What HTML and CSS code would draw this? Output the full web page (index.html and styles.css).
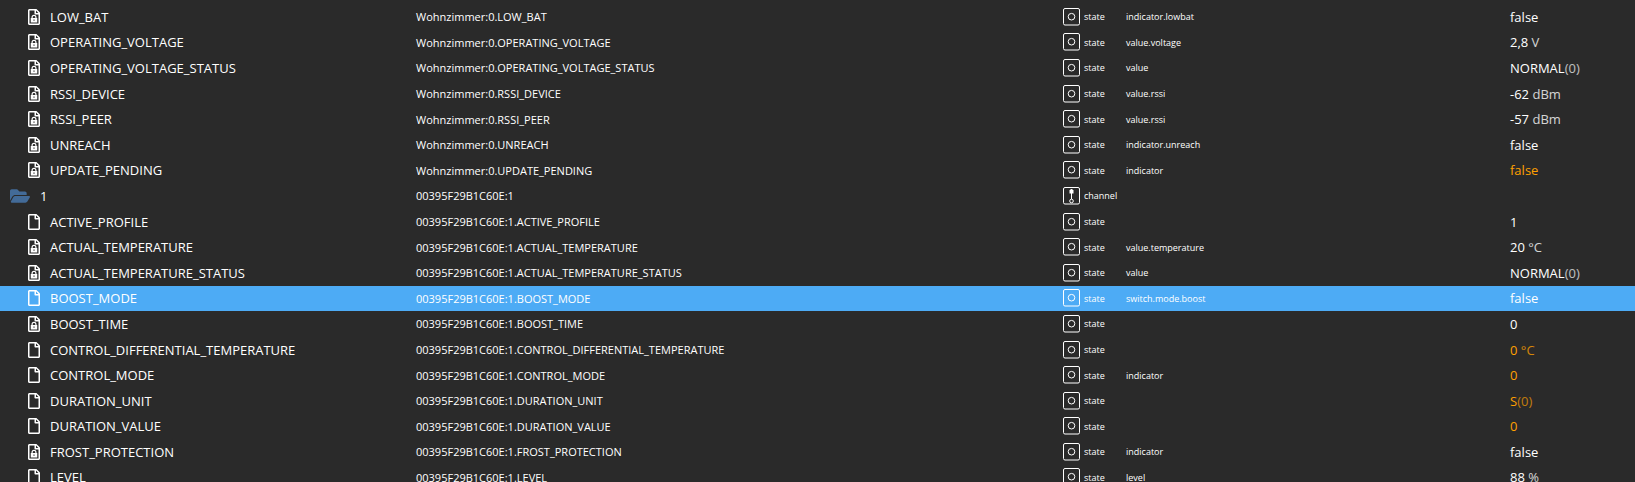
FILE: index.html
```
<!DOCTYPE html>
<html lang="de">
<head>
<meta charset="utf-8">
<title>Objekte</title>
<link rel="stylesheet" href="styles.css">
</head>
<body>
<svg class="sprite" aria-hidden="true">
  <symbol id="file" viewBox="0 0 384 512"><path d="M369.9 97.9L286 14C277 5 264.8 0 252.1 0H48C21.5 0 0 21.5 0 48v416c0 26.500 21.500 48 48 48h288c26.500 0 48-21.500 48-48V131.900c0-12.700-5.100-25-14.100-34zM332.100 128H256V51.900l76.100 76.100zM48 464V48h160v104c0 13.300 10.700 24 24 24h104v288H48z"/></symbol>
  <symbol id="locked" viewBox="0 0 384 512"><use href="#file"/><path fill-rule="evenodd" d="M88 288h24v-24a80 80 0 0 1 160 0v24h24v144H88zM150 288h84v-24a42 42 0 0 0-84 0zM174 334v44h36v-44z"/></symbol>
  <symbol id="folder" viewBox="0 0 576 512"><path d="M572.694 292.093L500.270 416.248A63.997 63.997 0 0 1 444.989 448H45.025c-18.523 0-30.064-20.093-20.731-36.093l72.424-124.155A64 64 0 0 1 152 256h399.964c18.523 0 30.064 20.093 20.730 36.093zM152 224h328v-48c0-26.510-21.490-48-48-48H272l-64-64H48C21.490 64 0 85.490 0 112v278.046l69.077-118.418C86.214 242.250 117.989 224 152 224z"/></symbol>
  <symbol id="frame" viewBox="0 0 17 18"><rect x=".5" y=".5" width="16" height="16.500" rx="1.500" fill="none" stroke="currentColor"/></symbol>
  <symbol id="state" viewBox="0 0 17 18"><use href="#frame"/><circle cx="8.500" cy="8.700" r="3.300" fill="none" stroke="currentColor"/></symbol>
  <symbol id="channel" viewBox="0 0 17 18"><use href="#frame"/><path d="M6.500 3h4v3.500h-4zM7.500 2h2v1h-2zM8 6h1v6H8z"/><circle cx="8.500" cy="14" r="1.800" fill="none" stroke="currentColor"/></symbol>
</svg>
<table class="objects">
<tbody>
<tr><td class="name"></td><td class="id"></td><td class="type"><svg class="badge"><use href="#state"/></svg></td><td class="role"></td><td class="value"></td></tr>
<tr><td class="name"><svg class="doc"><use href="#locked"/></svg>LOW_BAT</td><td class="id">Wohnzimmer:0.LOW_BAT</td><td class="type"><svg class="badge"><use href="#state"/></svg>state</td><td class="role">indicator.lowbat</td><td class="value">false</td></tr>
<tr><td class="name"><svg class="doc"><use href="#locked"/></svg>OPERATING_VOLTAGE</td><td class="id">Wohnzimmer:0.OPERATING_VOLTAGE</td><td class="type"><svg class="badge"><use href="#state"/></svg>state</td><td class="role">value.voltage</td><td class="value">2,8 <span class="unit">V</span></td></tr>
<tr><td class="name"><svg class="doc"><use href="#locked"/></svg>OPERATING_VOLTAGE_STATUS</td><td class="id">Wohnzimmer:0.OPERATING_VOLTAGE_STATUS</td><td class="type"><svg class="badge"><use href="#state"/></svg>state</td><td class="role">value</td><td class="value">NORMAL<span class="raw">(0)</span></td></tr>
<tr><td class="name"><svg class="doc"><use href="#locked"/></svg>RSSI_DEVICE</td><td class="id">Wohnzimmer:0.RSSI_DEVICE</td><td class="type"><svg class="badge"><use href="#state"/></svg>state</td><td class="role">value.rssi</td><td class="value">-62 <span class="unit">dBm</span></td></tr>
<tr><td class="name"><svg class="doc"><use href="#locked"/></svg>RSSI_PEER</td><td class="id">Wohnzimmer:0.RSSI_PEER</td><td class="type"><svg class="badge"><use href="#state"/></svg>state</td><td class="role">value.rssi</td><td class="value">-57 <span class="unit">dBm</span></td></tr>
<tr><td class="name"><svg class="doc"><use href="#locked"/></svg>UNREACH</td><td class="id">Wohnzimmer:0.UNREACH</td><td class="type"><svg class="badge"><use href="#state"/></svg>state</td><td class="role">indicator.unreach</td><td class="value">false</td></tr>
<tr><td class="name"><svg class="doc"><use href="#locked"/></svg>UPDATE_PENDING</td><td class="id">Wohnzimmer:0.UPDATE_PENDING</td><td class="type"><svg class="badge"><use href="#state"/></svg>state</td><td class="role">indicator</td><td class="value pending">false</td></tr>
<tr><td class="name group"><svg class="folder"><use href="#folder"/></svg>1</td><td class="id">00395F29B1C60E:1</td><td class="type"><svg class="badge"><use href="#channel"/></svg>channel</td><td class="role"></td><td class="value"></td></tr>
<tr><td class="name"><svg class="doc"><use href="#file"/></svg>ACTIVE_PROFILE</td><td class="id">00395F29B1C60E:1.ACTIVE_PROFILE</td><td class="type"><svg class="badge"><use href="#state"/></svg>state</td><td class="role"></td><td class="value">1</td></tr>
<tr><td class="name"><svg class="doc"><use href="#locked"/></svg>ACTUAL_TEMPERATURE</td><td class="id">00395F29B1C60E:1.ACTUAL_TEMPERATURE</td><td class="type"><svg class="badge"><use href="#state"/></svg>state</td><td class="role">value.temperature</td><td class="value">20 <span class="unit">°C</span></td></tr>
<tr><td class="name"><svg class="doc"><use href="#locked"/></svg>ACTUAL_TEMPERATURE_STATUS</td><td class="id">00395F29B1C60E:1.ACTUAL_TEMPERATURE_STATUS</td><td class="type"><svg class="badge"><use href="#state"/></svg>state</td><td class="role">value</td><td class="value">NORMAL<span class="raw">(0)</span></td></tr>
<tr class="selected"><td class="name"><svg class="doc"><use href="#file"/></svg>BOOST_MODE</td><td class="id">00395F29B1C60E:1.BOOST_MODE</td><td class="type"><svg class="badge"><use href="#state"/></svg>state</td><td class="role">switch.mode.boost</td><td class="value">false</td></tr>
<tr><td class="name"><svg class="doc"><use href="#locked"/></svg>BOOST_TIME</td><td class="id">00395F29B1C60E:1.BOOST_TIME</td><td class="type"><svg class="badge"><use href="#state"/></svg>state</td><td class="role"></td><td class="value">0</td></tr>
<tr><td class="name"><svg class="doc"><use href="#file"/></svg>CONTROL_DIFFERENTIAL_TEMPERATURE</td><td class="id">00395F29B1C60E:1.CONTROL_DIFFERENTIAL_TEMPERATURE</td><td class="type"><svg class="badge"><use href="#state"/></svg>state</td><td class="role"></td><td class="value pending">0 <span class="unit">°C</span></td></tr>
<tr><td class="name"><svg class="doc"><use href="#file"/></svg>CONTROL_MODE</td><td class="id">00395F29B1C60E:1.CONTROL_MODE</td><td class="type"><svg class="badge"><use href="#state"/></svg>state</td><td class="role">indicator</td><td class="value pending">0</td></tr>
<tr><td class="name"><svg class="doc"><use href="#file"/></svg>DURATION_UNIT</td><td class="id">00395F29B1C60E:1.DURATION_UNIT</td><td class="type"><svg class="badge"><use href="#state"/></svg>state</td><td class="role"></td><td class="value pending">S<span class="raw">(0)</span></td></tr>
<tr><td class="name"><svg class="doc"><use href="#file"/></svg>DURATION_VALUE</td><td class="id">00395F29B1C60E:1.DURATION_VALUE</td><td class="type"><svg class="badge"><use href="#state"/></svg>state</td><td class="role"></td><td class="value pending">0</td></tr>
<tr><td class="name"><svg class="doc"><use href="#locked"/></svg>FROST_PROTECTION</td><td class="id">00395F29B1C60E:1.FROST_PROTECTION</td><td class="type"><svg class="badge"><use href="#state"/></svg>state</td><td class="role">indicator</td><td class="value">false</td></tr>
<tr><td class="name"><svg class="doc"><use href="#file"/></svg>LEVEL</td><td class="id">00395F29B1C60E:1.LEVEL</td><td class="type"><svg class="badge"><use href="#state"/></svg>state</td><td class="role">level</td><td class="value">88 <span class="unit">%</span></td></tr>
</tbody>
</table>
</body>
</html>
```
FILE: styles.css
```
* {
  box-sizing: border-box;
}

body {
  margin: 0;
  height: 100vh;
  overflow: hidden;
  background: #2a2a2a;
  color: #fff;
  font-family: "Open Sans", "Noto Sans", sans-serif;
}

.sprite {
  display: none;
}

svg {
  flex: none;
  fill: currentColor;
}

/* The list is scrolled: only the lower edge of its first row shows. */
.objects,
.objects tbody {
  display: block;
}

.objects {
  margin-top: -1.35rem;
}

.objects tr {
  display: grid;
  grid-template-columns: 416px 1fr 63px 384px 125px;
  height: 1.6rem;
}

.objects td {
  display: flex;
  align-items: center;
  padding: 0;
  white-space: nowrap;
}

.objects .name {
  gap: 10px;
  padding-left: 28px;
  font-size: 13px;
}

.objects .group {
  padding-left: 10px;
}

.id {
  font-size: 11px;
}

.type {
  gap: 4px;
}

.type,
.role {
  font-size: 9px;
  font-weight: 500;
}

.objects .value {
  font-size: 13px;
  white-space: pre;
}

.doc {
  width: 12px;
  height: 16px;
}

.folder {
  width: 20px;
  height: 18px;
  color: #436b98;
}

.badge {
  width: 17px;
  height: 18px;
}

.unit {
  opacity: 0.8;
}

.raw {
  opacity: 0.7;
}

.pending {
  color: #ffa000;
}

.selected {
  background: #4dabf5;
}
```
